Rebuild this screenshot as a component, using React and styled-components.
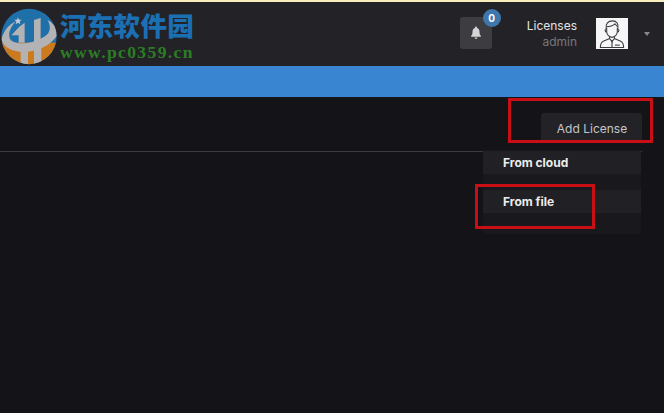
import React from "react";
import styled, { createGlobalStyle } from "styled-components";

const Global = createGlobalStyle`
  html, body { margin: 0; padding: 0; background: #141318; }
  body { width: 664px; height: 413px; overflow: hidden; font-family: Inter, "Noto Sans", sans-serif; }
`;
const Page = styled.div`
  position: relative; width: 664px; height: 413px; display: flex; flex-direction: column; background: #141318;
`;
const TopLine = styled.div`height: 2px; background: #f7eebc;`;
const Header = styled.header`
  height: 64px; background: #232327; display: flex; align-items: center; justify-content: space-between; box-sizing: border-box;
`;
const Brand = styled.div`display: flex; align-items: flex-start; padding-left: 1px;`;
const BrandText = styled.div`display: flex; flex-direction: column; margin-left: 3px; margin-top: 5px;`;
const BrandName = styled.div`
  font-family: "Noto Sans CJK SC", sans-serif; font-weight: 900; font-size: 26.500px; line-height: 32px; letter-spacing: .3px; color: #1b70b4;
`;
const BrandUrl = styled.div`
  font-family: "Liberation Serif", serif; font-weight: 700; font-size: 17.500px; line-height: 18px; letter-spacing: 1.400px; color: #2c7d24; margin-top: 2px;
`;
const UserArea = styled.div`display: flex; align-items: center; padding-right: 14px; margin-top: -1px;`;
const BellButton = styled.div`
  position: relative; width: 32px; height: 32px; border-radius: 3px; background: #3d3c40; display: flex; align-items: center; justify-content: center; margin-right: 35px; margin-bottom: 2px;
`;
const Badge = styled.div`
  position: absolute; top: -8px; right: -9px; width: 18px; height: 18px; border-radius: 50%; background: #3f76ab; color: #fff; font-size: 10px; font-weight: 700; display: flex; align-items: center; justify-content: center;
`;
const UserText = styled.div`display: flex; flex-direction: column; align-items: flex-end; font-size: 12px; line-height: 16px; margin-right: 19px;`;
const UserName = styled.div`color: #e4e4e4;`;
const UserRole = styled.div`color: #77777b;`;
const Avatar = styled.div`width: 32px; height: 31px; background: #f6f5f8; display: flex; align-items: center; justify-content: center;`;
const Caret = styled.div`
  width: 0; height: 0; margin-left: 16px; border-left: 3.500px solid transparent; border-right: 3.500px solid transparent; border-top: 4px solid #88888c;
`;
const BlueBar = styled.div`height: 31px; background: #3a85d2;`;
const Content = styled.main`position: relative; flex: 1;`;
const Toolbar = styled.div`
  height: 38px; margin-right: 22px; border-bottom: 1px solid #3d3c40; display: flex; justify-content: flex-end; align-items: flex-start; padding-top: 16px;
`;
const AddButton = styled.button`
  width: 101px; height: 30px; border: 0; border-radius: 3px 3px 0 0; background: #232327; color: #c6c6c8; font-family: inherit; font-size: 12px; padding: 0 0 0 1px;
`;
const Menu = styled.div`
  position: absolute; left: 483px; top: 53px; width: 158px; height: 84px; background: #19181d; display: flex; flex-direction: column; gap: 16px; padding-top: 1px; box-sizing: border-box;
`;
const MenuItem = styled.div`
  height: 23px; background: #212125; color: #ececec; font-size: 12px; font-weight: 700; line-height: 23px; padding-left: 20px;
`;
const Callout = styled.div`
  position: absolute; border: 3px solid #c80f16; box-sizing: border-box; left: ${p => p.$x}px; top: ${p => p.$y}px; width: ${p => p.$w}px; height: ${p => p.$h}px;
`;

const Logo = () => (
  <svg width="56" height="57" viewBox="3 14 168 171" style={{ marginTop: 4 }}>
    <defs><clipPath id="ball"><circle cx="87" cy="99.500" r="83" /></clipPath></defs>
    <g clipPath="url(#ball)">
      <rect x="0" y="0" width="180" height="190" fill="#1f6fa8" />
      <rect x="0" y="118" width="180" height="72" fill="#cc7a1e" />
      <path d="M4 108 C12 80 28 62 48 54 C30 72 22 96 32 110 C50 128 110 122 143 92 C153 78 150 62 142 50 C160 58 172 76 172 96 C150 128 110 146 72 146 C35 146 10 132 4 108 Z" fill="#b3b3b6" />
      <path d="M34 96 L58 70 L74 58 L74 118 L56 118 L56 96 Z" fill="#b3b3b6" />
      <path d="M102 50 L122 44 L122 110 L102 118 Z" fill="#b3b3b6" />
      <path d="M62 140 H84 V190 H62 Z M102 135 H124 V190 H102 Z" fill="#b3b3b6" />
      <path d="M54 42 l3 7 8 .6 -6 5 2 8 -7 -4 -7 4 2 -8 -6 -5 8 -.6 z" fill="#c3ccd6" />
    </g>
  </svg>
);
const Bell = () => (
  <svg width="12" height="13" viewBox="0 0 12 13">
    <path d="M6 0.500a1 1 0 0 1 1 1v.4C8.700 2.400 9.500 3.800 9.500 5.600c0 2.600.5 3.600 1.500 4.600v.6H1v-.6c1-1 1.500-2 1.500-4.600 0-1.800.8-3.200 2.500-3.700v-.4a1 1 0 0 1 1-1z M4.600 11.500h2.800a1.400 1.400 0 0 1-2.800 0z" fill="#d5d5d6" />
  </svg>
);
const Person = () => (
  <svg width="30" height="31" viewBox="0 0 30 32" fill="none" stroke="#3a3a3c" strokeWidth="1.100">
    <path d="M9 11c-.8-5 2-8 6.500-8S22 6 21 11" />
    <path d="M9 9c3 0 7-1 9-3 1 1.500 2 2 3 3" />
    <path d="M9.500 10v4c0 3.500 3 6 5.500 6s5.500-2.500 5.500-6v-4" />
    <path d="M8.500 11.500c-.8 0-.8 3 .8 3M21.500 11.500c.8 0 .8 3-.8 3" />
    <path d="M12.500 19v2.500L15 24l2.500-2.500V19" />
    <path d="M12 21.500 6 24c-2 1-3 3-3 6.500h24c0-3.500-1-5.500-3-6.500l-6-2.500" />
    <path d="M15 24v6M14 24.500h2" />
    <path d="M18 28h5" />
  </svg>
);

export default function App() {
  return (
    <Page>
      <Global />
      <TopLine />
      <Header>
        <Brand>
          <Logo />
          <BrandText>
            <BrandName>河东软件园</BrandName>
            <BrandUrl>www.pc0359.cn</BrandUrl>
          </BrandText>
        </Brand>
        <UserArea>
          <BellButton><Bell /><Badge>0</Badge></BellButton>
          <UserText>
            <UserName>Licenses</UserName>
            <UserRole>admin</UserRole>
          </UserText>
          <Avatar><Person /></Avatar>
          <Caret />
        </UserArea>
      </Header>
      <BlueBar />
      <Content>
        <Toolbar><AddButton>Add License</AddButton></Toolbar>
        <Menu>
          <MenuItem>From cloud</MenuItem>
          <MenuItem>From file</MenuItem>
        </Menu>
        <Callout $x={508} $y={1} $w={145} $h={45} />
        <Callout $x={475} $y={87} $w={120} $h={45} />
      </Content>
    </Page>
  );
}
